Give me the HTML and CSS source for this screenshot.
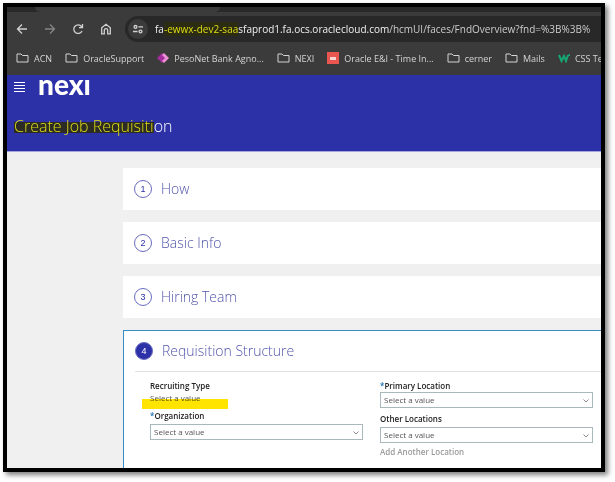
FILE: index.html
```html
<!DOCTYPE html>
<html lang="en">
<head>
  <meta charset="UTF-8" />
  <meta name="viewport" content="width=device-width, initial-scale=1.0"/>
  <title>Create Job Requisition</title>
  <link rel="stylesheet" href="styles.css">
</head>
<body>
  <div class="window">
    <!-- browser bar -->
    <div class="browser">
      <div class="tabs"><span class="tab"></span></div>
      <div class="toolbar">
        <button class="nav" aria-label="Back">
          <svg viewBox="0 0 12 12"><path d="M11 6H1.5M6 1.5L1.5 6 6 10.500"/></svg>
        </button>
        <button class="nav off" aria-label="Forward" disabled>
          <svg viewBox="0 0 12 12"><path d="M1 6h9.500M6 1.500L10.500 6 6 10.500"/></svg>
        </button>
        <button class="nav" aria-label="Reload">
          <svg viewBox="0 0 12 12"><path d="M10 8A4.300 4.300 0 1 1 9.500 3.500L10.500 4.600M10.500 1v3.600H7"/></svg>
        </button>
        <button class="nav" aria-label="Home">
          <svg viewBox="0 0 12 12"><path d="M1.700 4.700L6 1.300l4.300 3.400v6.200H7.700V7.300a1.700 1.700 0 0 0-3.400 0v3.600H1.700z"/></svg>
        </button>
        <div class="address">
          <button class="site-info" aria-label="Site information">
            <svg viewBox="0 0 12 12"><path d="M6.500 3.500H12M0 9h5.500"/><circle cx="3" cy="3.500" r="1.700"/><circle cx="9" cy="9" r="1.700"/></svg>
          </button>
          <span class="url">fa<mark>-ewwx-dev2-saa</mark>sfaprod1.fa.ocs.oraclecloud.com<span class="path">/hcmUI/faces/FndOverview?fnd=%3B%3B%</span></span>
        </div>
      </div>
      <nav class="bookmarks">
        <a href="#"><svg class="folder" viewBox="0 0 13 10"><path d="M1 1h4l1.500 1.500H12V9H1z"/></svg>ACN</a>
        <a href="#"><svg class="folder" viewBox="0 0 13 10"><path d="M1 1h4l1.500 1.500H12V9H1z"/></svg>OracleSupport</a>
        <a href="#"><svg class="peso" viewBox="0 0 12 12"><path fill="#a32d9c" d="M5 1L0 6l5 5 3-5z"/><path fill="#ef8fd6" d="M7 1l5 5-5 5-2-2 3-3-3-3z"/></svg>PesoNet Bank Agno...</a>
        <a href="#"><svg class="folder" viewBox="0 0 13 10"><path d="M1 1h4l1.500 1.500H12V9H1z"/></svg>NEXI</a>
        <a href="#"><svg class="time" viewBox="0 0 12 12"><path fill="#e8564f" d="M0 0h12v12H0z"/><path fill="#f8d5d3" d="M3 5h6v3H3z"/></svg>Oracle E&amp;I - Time In...</a>
        <a href="#"><svg class="folder" viewBox="0 0 13 10"><path d="M1 1h4l1.500 1.500H12V9H1z"/></svg>cerner</a>
        <a href="#"><svg class="folder" viewBox="0 0 13 10"><path d="M1 1h4l1.500 1.500H12V9H1z"/></svg>Mails</a>
        <a href="#"><svg class="css-mark" viewBox="0 0 12 10"><path d="M1 2l2.500 6L6 3l2 5 2-6M11.500 1v2"/></svg>CSS Te</a>
      </nav>
    </div>

    <header>
      <div class="brand">
        <button class="menu" aria-label="Menu">
          <svg viewBox="0 0 11 10"><path d="M0 .5h11M0 3.500h11M0 6.500h11M0 9.500h11"/></svg>
        </button>
        <span class="logo">nexı</span>
      </div>
      <h1><mark>Create Job Requisiti</mark>on</h1>
    </header>

    <main>
      <section class="card"><span class="step">1</span><h2>How</h2></section>
      <section class="card"><span class="step">2</span><h2>Basic Info</h2></section>
      <section class="card"><span class="step">3</span><h2>Hiring Team</h2></section>

      <section class="card open">
        <div class="card-head"><span class="step">4</span><h2>Requisition Structure</h2></div>
        <div class="fields">
          <div class="column">
            <div class="recruiting">
              <div class="label">Recruiting Type</div>
              <div class="value">Select a value</div>
              <span class="marker"></span>
            </div>
            <label for="organization"><span class="star">*</span>Organization</label>
            <div class="select">
              <select id="organization"><option>Select a value</option></select>
              <svg viewBox="0 0 6 4"><path d="M.5.5L3 3 5.500.5"/></svg>
            </div>
          </div>
          <div class="column">
            <label class="tight" for="primary"><span class="star">*</span>Primary Location</label>
            <div class="select">
              <select id="primary"><option>Select a value</option></select>
              <svg viewBox="0 0 6 4"><path d="M.5.5L3 3 5.500.5"/></svg>
            </div>
            <label class="other" for="other">Other Locations</label>
            <div class="select">
              <select id="other"><option>Select a value</option></select>
              <svg viewBox="0 0 6 4"><path d="M.5.5L3 3 5.500.5"/></svg>
            </div>
            <a class="add" href="#">Add Another Location</a>
          </div>
        </div>
      </section>
    </main>
  </div>
</body>
</html>
```
FILE: styles.css
```css
* {
  box-sizing: border-box;
}

body {
  margin: 0;
  padding: 3px 10px 10px 3px;
  min-height: 100vh;
  display: flex;
  background: #fff;
  font-family: "Open Sans", "Noto Sans", sans-serif;
}

button {
  padding: 0;
  border: none;
  background: none;
  color: inherit;
}

svg {
  display: block;
  flex: none;
  fill: none;
  stroke: currentColor;
}

mark {
  color: #dede16;
  background: #2c2c12;
}

.window {
  flex: 1;
  min-width: 0;
  display: flex;
  flex-direction: column;
  border: 4px solid #000;
  box-shadow: 3px 3px 5px rgba(0, 0, 0, 0.5);
  background: #f0f0f0;
  overflow: hidden;
}

/* browser bar */
.browser {
  background: #3b3b3b;
  color: #d0d0d0;
  height: 68px;
}

.tabs {
  height: 5px;
  background: #292929;
}

.tab {
  display: block;
  width: 185px;
  height: 5px;
  margin-left: 28px;
  background: #3b3b3b;
  border-radius: 0 0 5px 5px;
}

.toolbar {
  display: flex;
  align-items: center;
  gap: 16px;
  height: 34px;
  padding-left: 9px;
}

.nav svg {
  width: 12px;
  height: 12px;
  stroke-width: 1.3;
}

.nav.off {
  color: #858585;
}

.address {
  flex: 1;
  min-width: 0;
  display: flex;
  align-items: center;
  gap: 7px;
  height: 26px;
  padding-left: 3px;
  margin-left: -3px;
  border-radius: 13px 0 0 13px;
  background: #282828;
  overflow: hidden;
}

.site-info {
  flex: none;
  width: 20px;
  height: 20px;
  padding: 5px;
  border-radius: 50%;
  background: #3b3b3b;
}

.site-info svg {
  stroke-width: 1.6;
}

.url {
  font-size: 10px;
  line-height: 14px;
  white-space: nowrap;
  color: #f0f0f0;
}

.path {
  color: #cccccc;
}

.bookmarks {
  display: flex;
  align-items: center;
  gap: 13px;
  height: 24px;
  padding-left: 9px;
  overflow: hidden;
}

.bookmarks a {
  display: flex;
  align-items: center;
  gap: 5px;
  color: #d4d4d4;
  font-size: 9px;
  white-space: nowrap;
  text-decoration: none;
}

.folder {
  width: 13px;
  height: 10px;
}

.peso,
.time {
  width: 12px;
  height: 12px;
  stroke: none;
}

.css-mark {
  width: 12px;
  height: 10px;
  color: #16a673;
  stroke-width: 2;
}

/* page header */
header {
  padding: 0 7px;
  height: 77px;
  background: #2d31a8;
  border-bottom: 1px solid #a6a6dc;
  color: #fff;
}

.brand {
  display: flex;
  align-items: center;
  gap: 13px;
  height: 24px;
}

.menu svg {
  width: 11px;
  height: 10px;
}

.logo {
  align-self: flex-start;
  font-family: Lato, sans-serif;
  font-size: 28px;
  font-weight: 900;
  line-height: 18px;
}

h1 {
  margin: 15px 0 0;
  font-size: 16px;
  font-weight: 300;
  line-height: 24px;
}

h1 mark {
  background: linear-gradient(transparent 7px, #2c2c24 7px, #2c2c24 18px, transparent 18px);
}

/* steps */
main {
  flex: 1;
  display: flex;
  flex-direction: column;
  gap: 12px;
  padding: 16px 0 0 116px;
}

.card {
  display: flex;
  align-items: center;
  gap: 9px;
  height: 42px;
  padding-left: 11px;
  background: #fff;
}

.step {
  flex: none;
  width: 18px;
  height: 18px;
  border: 1px solid #6a6cc0;
  border-radius: 50%;
  color: #2d31a8;
  font: 9px/16px "Liberation Sans", sans-serif;
  text-align: center;
}

h2 {
  margin: 0;
  color: #5054aa;
  font-size: 14px;
  font-weight: 300;
  line-height: 20px;
}

.open {
  flex: 1;
  display: block;
  height: auto;
  padding: 0 0 8px 11px;
  border-top: 1px solid #3b8dc4;
  border-left: 1px solid #3b8dc4;
}

.card-head {
  display: flex;
  align-items: center;
  gap: 9px;
  height: 41px;
  border-bottom: 1px solid #e2e2e2;
}

.open .step {
  background: #2d31a8;
  color: #fff;
}

.fields {
  display: grid;
  grid-template-columns: 1fr 1fr;
  gap: 17px;
  padding: 8px 8px 0 15px;
  font-size: 8px;
  line-height: 12px;
}

.column {
  min-width: 0;
}

label,
.label {
  display: block;
  color: #222;
  font-weight: 600;
}

.star {
  color: #1f6fb5;
}

.value {
  color: #555;
}

.recruiting {
  position: relative;
  margin-bottom: 6px;
}

/* highlighter stroke over the value */
.marker {
  position: absolute;
  left: -8px;
  top: 19px;
  width: 86px;
  height: 10px;
  background: #ffe400;
  mix-blend-mode: multiply;
}

.select {
  position: relative;
  margin-top: 2px;
}

.tight + .select {
  margin-top: 0;
}

.select select {
  display: block;
  width: 100%;
  height: 16px;
  padding: 0 3px;
  border: 1px solid #a9b8bd;
  border-radius: 0;
  appearance: none;
  background: #fff;
  color: #555;
  font: inherit;
}

.select svg {
  position: absolute;
  right: 4px;
  top: 7px;
  width: 6px;
  height: 4px;
  color: #888;
  pointer-events: none;
}

.other {
  margin-top: 5px;
}

.add {
  display: block;
  margin-top: 3px;
  color: #999;
  font-weight: 600;
  text-decoration: none;
}
```
